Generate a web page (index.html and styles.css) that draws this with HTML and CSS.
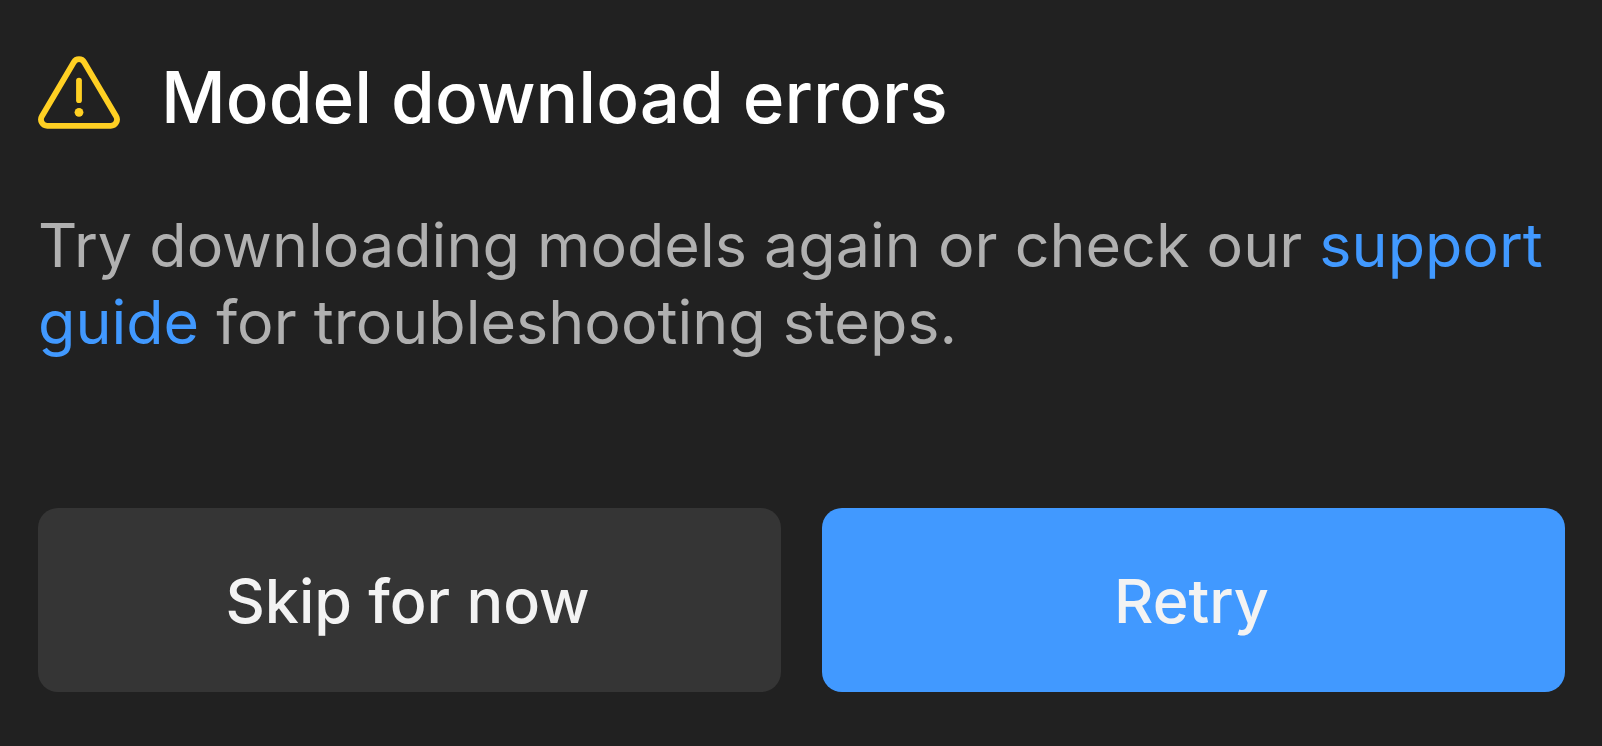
FILE: index.html
```html
<!DOCTYPE html>
<html lang="en">
<head>
<meta charset="utf-8">
<title>Model download errors</title>
<link rel="stylesheet" href="styles.css">
</head>
<body>
<main class="dialog">
  <header class="heading">
    <svg class="warning" viewBox="0 0 82 73" aria-hidden="true">
      <path d="M35.800 6.200 A6 6 0 0 1 46.200 6.200 L78.100 60.300 A6.300 6.300 0 0 1 72.700 69.800 H9.300 A6.300 6.300 0 0 1 3.900 60.300 Z" fill="none" stroke="#ffd023" stroke-width="5.800"/>
      <path d="M41 24.600 V44.200" stroke="#ffd023" stroke-width="5.800" stroke-linecap="round"/>
      <circle cx="41" cy="56.300" r="4.400" fill="#ffd023"/>
    </svg>
    <h1 class="title">Model download errors</h1>
  </header>
  <p class="message">Try downloading models again or check our <a class="link" href="#">support guide</a> for troubleshooting steps.</p>
  <div class="actions">
    <button class="button" type="button">Skip for now</button>
    <button class="button primary" type="button">Retry</button>
  </div>
</main>
</body>
</html>
```
FILE: styles.css
```css
* { box-sizing: border-box; }
body {
  margin: 0;
  background: #212121;
  font-family: Inter, sans-serif;
}
.dialog {
  display: flex;
  flex-direction: column;
  padding: 56px 37px 53px 38px;
}
.heading {
  display: flex;
  align-items: flex-start;
  gap: 41px;
}
.warning { width: 82px; height: 73px; flex: none; }
.title {
  margin: 0;
  color: #fff;
  font-size: 71px;
  font-weight: 500;
  line-height: 82px;
}
.message {
  margin: 69px 0 0;
  color: #b0b0b0;
  font-size: 61px;
  line-height: 77px;
}
.link { color: #4199ff; text-decoration: none; }
.actions {
  display: grid;
  grid-template-columns: 1fr 1fr;
  gap: 41px;
  margin-top: 147px;
}
.button {
  min-height: 184px;
  padding: 2px 4px 0 0;
  border: 0;
  border-radius: 20px;
  background: #353535;
  color: #f3f3f3;
  font: 500 61px Inter, sans-serif;
}
.primary { background: #4199ff; }
```
